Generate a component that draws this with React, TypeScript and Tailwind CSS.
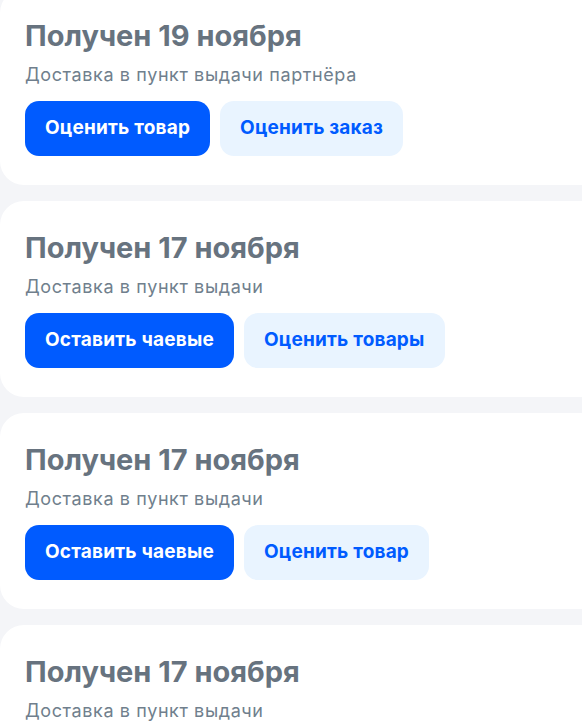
import type { ReactNode } from "react";

type Order = {
  title: string;
  delivery: string;
  primary: string;
  secondary: string;
};

const orders: Order[] = [
  { title: "Получен 19 ноября", delivery: "Доставка в пункт выдачи партнёра", primary: "Оценить товар", secondary: "Оценить заказ" },
  { title: "Получен 17 ноября", delivery: "Доставка в пункт выдачи", primary: "Оставить чаевые", secondary: "Оценить товары" },
  { title: "Получен 17 ноября", delivery: "Доставка в пункт выдачи", primary: "Оставить чаевые", secondary: "Оценить товар" },
  { title: "Получен 17 ноября", delivery: "Доставка в пункт выдачи", primary: "Оставить чаевые", secondary: "Оценить товар" },
];

function ActionButton({ children, primary }: { children: ReactNode; primary?: boolean }) {
  return (
    <button
      type="button"
      className={
        primary
          ? "flex h-[55px] items-center rounded-[14px] bg-[#005bff] px-5 text-[19px] font-bold tracking-[0.2px] text-white"
          : "flex h-[55px] items-center rounded-[14px] bg-[#e9f4ff] px-5 text-[19px] font-bold tracking-[0.2px] text-[#005bff]"
      }
    >
      {children}
    </button>
  );
}

function OrderCard({ order }: { order: Order }) {
  return (
    <section className="shrink-0 rounded-3xl bg-white pb-[29px] pl-[25px] pt-[29px]">
      <h2 className="text-[29px] font-bold leading-9 text-[#67737f]">{order.title}</h2>
      <p className="mt-[9px] text-[18px] leading-6 tracking-[0.6px] text-[#707f8d]">{order.delivery}</p>
      <div className="mt-[14px] flex gap-[10px]">
        <ActionButton primary>{order.primary}</ActionButton>
        <ActionButton>{order.secondary}</ActionButton>
      </div>
    </section>
  );
}

export default function App() {
  return (
    <div className="h-[725px] overflow-hidden bg-[#f4f5f8] font-['Inter',sans-serif]">
      <div className="-mr-8 -mt-[11px] flex flex-col gap-4">
        {orders.map((order, i) => (
          <OrderCard key={i} order={order} />
        ))}
      </div>
    </div>
  );
}
